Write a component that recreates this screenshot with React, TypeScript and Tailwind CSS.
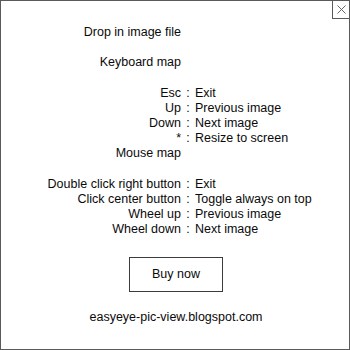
const keys: [string, string][] = [
  ["Esc", "Exit"],
  ["Up", "Previous image"],
  ["Down", "Next image"],
  ["*", "Resize to screen"],
];

const mouse: [string, string][] = [
  ["Double click right button", "Exit"],
  ["Click center button", "Toggle always on top"],
  ["Wheel up", "Previous image"],
  ["Wheel down", "Next image"],
];

function Row({ label, value }: { label: string; value?: string }) {
  return (
    <div className="flex h-[15.15px] items-center">
      <span className="w-[180px] shrink-0 whitespace-nowrap text-right">{label}</span>
      {value !== undefined && (
        <>
          <span className="w-[14px] shrink-0 text-center">:</span>
          <span className="whitespace-nowrap">{value}</span>
        </>
      )}
    </div>
  );
}

const Blank = () => <div className="h-[15.15px]" />;

export default function App() {
  return (
    <div className="relative flex h-[350px] w-[350px] flex-col border border-[#5a5a5a] bg-white font-['Liberation_Sans',Arial,sans-serif] text-[12.5px] text-[#0a0a0a]">
      {/* close box */}
      <button className="absolute right-0 top-0 flex h-[18px] w-[17px] items-center justify-center border-b border-l border-[#5a5a5a] bg-white">
        <svg width="9" height="9" viewBox="0 0 9 9" className="text-[#666]">
          <path d="M0.5 0.5L8.5 8.5M8.5 0.5L0.5 8.5" stroke="currentColor" strokeWidth="1" />
        </svg>
      </button>

      <div className="mt-[24px] flex flex-col">
        <Row label="Drop in image file" />
        <Blank />
        <Row label="Keyboard map" />
        <Blank />
        {keys.map(([k, v]) => (
          <Row key={k} label={k} value={v} />
        ))}
        <Row label="Mouse map" />
        <Blank />
        {mouse.map(([k, v]) => (
          <Row key={k} label={k} value={v} />
        ))}
      </div>

      <div className="mt-[20px] flex justify-center pl-[2px]">
        <button className="h-[35px] w-[94px] border border-[#3c3c3c] bg-white text-[12.5px] text-[#0a0a0a]">
          Buy now
        </button>
      </div>

      <div className="mt-[16px] text-center pl-[2px]">easyeye-pic-view.blogspot.com</div>
    </div>
  );
}
